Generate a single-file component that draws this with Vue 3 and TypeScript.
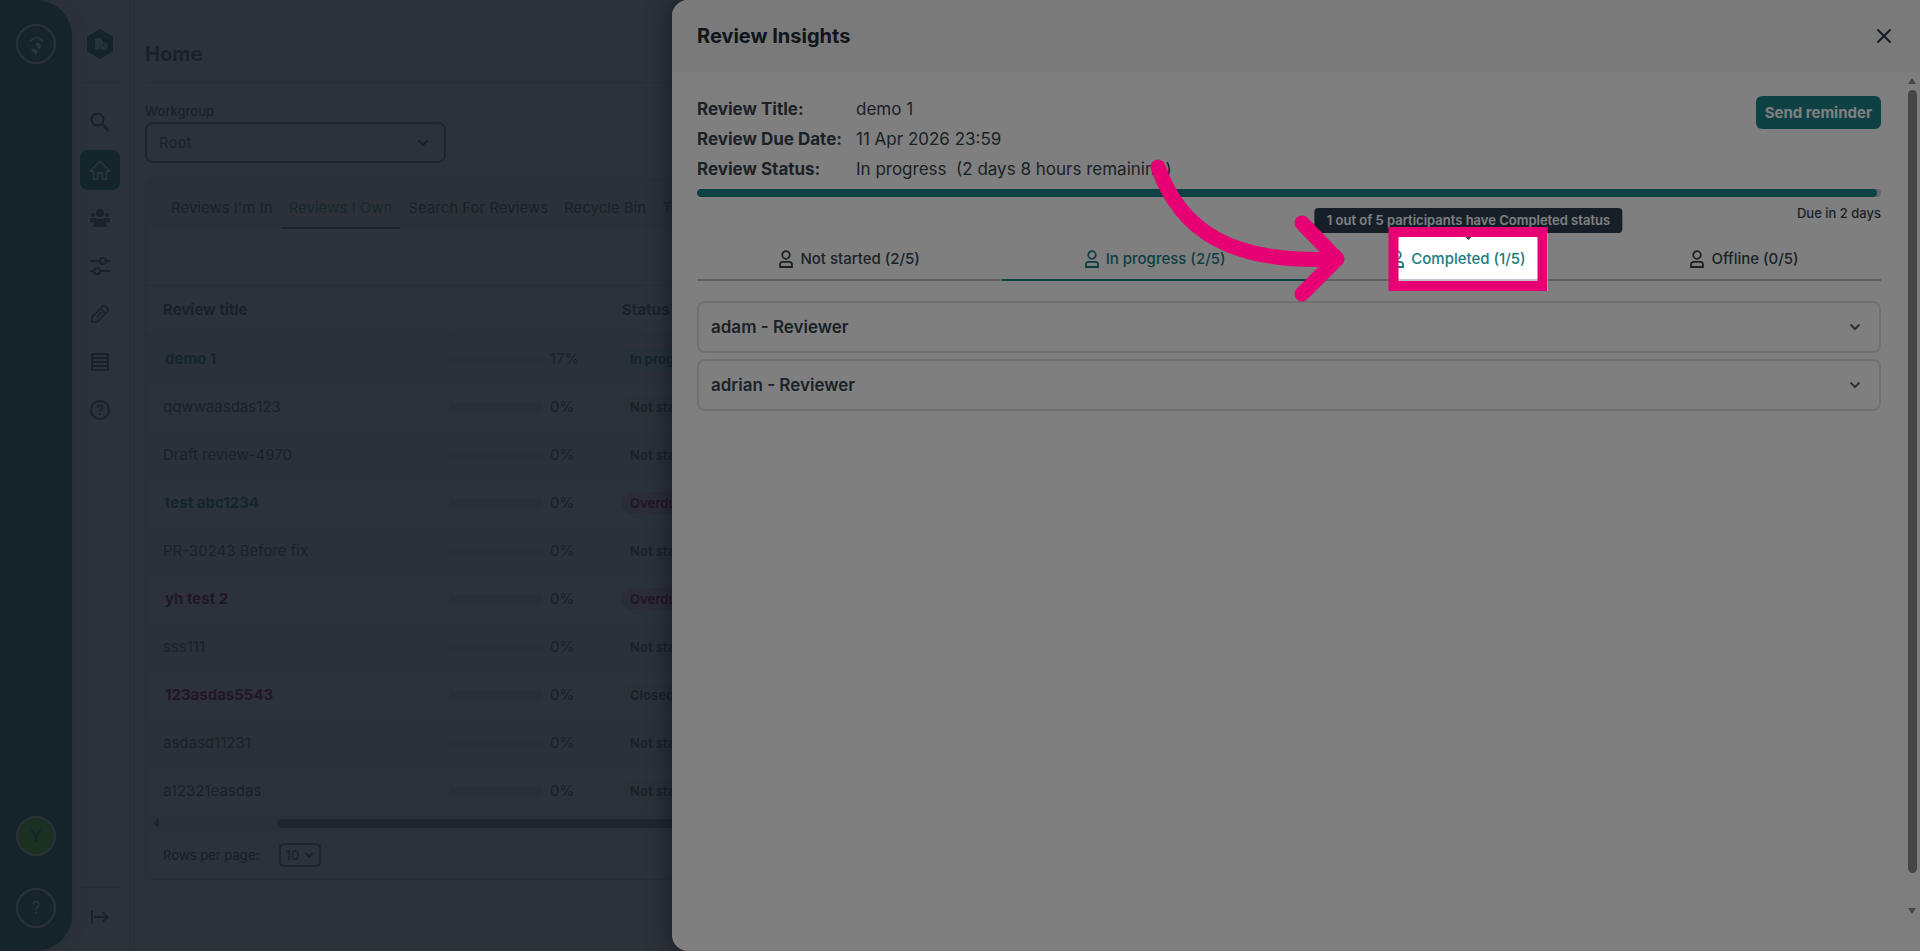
<script setup lang="ts">
import { ref } from 'vue'

interface Review {
  title: string
  percent: number
  status: string
  tone?: 'teal' | 'pink'
  badge?: 'teal' | 'pink' | 'grey'
}

const reviews: Review[] = [
  { title: 'demo 1', percent: 17, status: 'In progress', tone: 'teal', badge: 'teal' },
  { title: 'qqwwaasdas123', percent: 0, status: 'Not started', badge: 'grey' },
  { title: 'Draft review-4970', percent: 0, status: 'Not started' },
  { title: 'test abc1234', percent: 0, status: 'Overdue', tone: 'teal', badge: 'pink' },
  { title: 'PR-30243 Before fix', percent: 0, status: 'Not started' },
  { title: 'yh test 2', percent: 0, status: 'Overdue', tone: 'pink', badge: 'pink' },
  { title: 'sss111', percent: 0, status: 'Not started' },
  { title: '123asdas5543', percent: 0, status: 'Closed', tone: 'pink', badge: 'grey' },
  { title: 'asdasd11231', percent: 0, status: 'Not started' },
  { title: 'a12321easdas', percent: 0, status: 'Not started', badge: 'grey' }
]

const reviewTabs = ["Reviews I'm In", 'Reviews I Own', 'Search For Reviews', 'Recycle Bin', 'Templates']
const activeReviewTab = ref('Reviews I Own')

const statusTabs = [
  { name: 'Not started', count: 2 },
  { name: 'In progress', count: 2 },
  { name: 'Completed', count: 1 },
  { name: 'Offline', count: 0 }
]
const activeStatus = ref('In progress')
const hoveredStatus = ref('Completed')
const total = 5
const people = ['adam - Reviewer', 'adrian - Reviewer']
const elapsed = ref(99.7)
const workgroup = ref('Root')
const pageSize = ref('10')
</script>

<template>
  <div class="page">
    <aside class="rail">
      <a href="#" class="ring" aria-label="Organisation">
        <svg width="36" height="36" viewBox="0 0 36 36">
          <path d="M11.500 15.500 18.500 11l7 4.500" fill="none" stroke="currentColor" stroke-width="1.600" />
          <path d="M17 17.500c2.500-1.500 6-.5 6 2.500 0 2-1.500 3.500-4 3.500l1-3.500c-1-.2-2-1.200-3-2.500zM13 23.500c2-1.500 6.500-.5 6.500 2 0 1.500-.5 2.500-2 4l-1-3c-1.500 0-2.500-1-3.500-3z" fill="currentColor" />
        </svg>
      </a>
      <div class="rail-bottom">
        <button class="ring user" type="button" aria-label="Account">Y</button>
        <button class="ring" type="button" aria-label="Help">?</button>
      </div>
    </aside>

    <nav class="nav" aria-label="Sections">
      <a href="#" class="brand" aria-label="Reviews">
        <svg width="28" height="32" viewBox="0 0 28 32">
          <path d="M14 1 27 8.500v15L14 31 1 23.500v-15z" fill="#2a4856" />
          <path d="M9 10h5l3 3v2.500a5 5 0 0 0-3 6H9z" fill="#506474" />
          <circle cx="18" cy="18.500" r="3" fill="none" stroke="#506474" stroke-width="1.400" />
          <path d="m16.500 18.500 1.200 1.200 2-2.200" fill="none" stroke="#506474" />
        </svg>
      </a>
      <div class="nav-list">
        <a href="#" class="nav-item" aria-label="Search">
          <svg viewBox="0 0 20 20"><circle cx="7.500" cy="7.500" r="6" /><path d="m12 12 6.500 6.500" stroke-width="2.600" /></svg>
        </a>
        <a href="#" class="nav-item active" aria-label="Home">
          <svg viewBox="0 0 20 20"><path d="M1.200 10 10 1.200 18.800 10v1.300h-2.300V19h-4.300v-6H7.800v6H3.500v-7.700H1.200z" stroke-width="1.500" /></svg>
        </a>
        <a href="#" class="nav-item" aria-label="Groups">
          <svg viewBox="0 0 20 20" class="solid"><circle cx="10" cy="5" r="4" /><circle cx="3" cy="7" r="2" /><circle cx="17" cy="7" r="2" /><path d="M0 10h6l1 1h6l1-1h6v4h-3.500v5h-13v-5H0z" /></svg>
        </a>
        <a href="#" class="nav-item" aria-label="Settings">
          <svg viewBox="0 0 20 20"><path d="M0 5h9.500M16.500 5H20M0 15h3.500M10.500 15H20" /><circle cx="13" cy="5" r="3" /><circle cx="7" cy="15" r="3" /></svg>
        </a>
        <a href="#" class="nav-item" aria-label="Edit">
          <svg viewBox="0 0 20 20" stroke-linejoin="round"><path d="M2 18v-5L13 2q1-.8 2 0l3 3q.8 1 0 2L7 18zM10.500 4.500l5 5M6.500 13.500l5-5" stroke-width="1.700" /></svg>
        </a>
        <a href="#" class="nav-item" aria-label="Lists">
          <svg viewBox="0 0 20 20"><path d="M2 2h16v16H2zM2 6h16M2 10h16M2 14h16" /></svg>
        </a>
        <a href="#" class="nav-item" aria-label="Support">
          <svg viewBox="0 0 20 20"><circle cx="10" cy="10" r="9" /><path d="M7.500 8c0-3.500 5-3.300 5-.3 0 1.800-2.500 2-2.500 4M10 13.200v1.800" /></svg>
        </a>
      </div>
      <div class="nav-foot">
        <button type="button" class="nav-item" aria-label="Expand menu">
          <svg viewBox="0 0 20 20"><path d="M2 3.500v13M5 10h12M12.500 5.200l5 4.800-5 4.800" /></svg>
        </button>
      </div>
    </nav>

    <main class="main">
      <h1 class="page-title">Home</h1>
      <label class="field-label" for="workgroup">Workgroup</label>
      <div class="select workgroup">
        <select id="workgroup" v-model="workgroup"><option>Root</option></select>
        <svg width="12" height="12" viewBox="0 0 12 12"><path d="m1.500 3.500 4.500 4.500 4.500-4.500" /></svg>
      </div>

      <section class="card">
        <div class="review-tabs" role="tablist">
          <button
            v-for="tab in reviewTabs" :key="tab" type="button" role="tab" class="review-tab"
            :class="{ active: tab === activeReviewTab }" @click="activeReviewTab = tab"
          >{{ tab }}</button>
        </div>
        <div class="toolbar"></div>
        <table class="reviews">
          <thead>
            <tr><th class="col-title">Review title</th><th class="col-progress"></th><th class="col-status">Status</th></tr>
          </thead>
          <tbody>
            <tr v-for="r in reviews" :key="r.title">
              <td class="col-title"><a href="#" class="review-link" :class="r.tone">{{ r.title }}</a></td>
              <td class="col-progress"><div class="meter"><span class="meter-bar"></span>{{ r.percent }}%</div></td>
              <td class="col-status"><span class="badge" :class="r.badge">{{ r.status }}</span></td>
            </tr>
          </tbody>
        </table>
        <div class="hscroll">
          <svg width="6" height="10" viewBox="0 0 6 10"><path d="M6 0v10L0 5z" /></svg>
          <span class="hthumb"></span>
        </div>
        <div class="pager">
          <label for="page-size">Rows per page:</label>
          <div class="select page-size">
            <select id="page-size" v-model="pageSize"><option>10</option></select>
            <svg width="10" height="10" viewBox="0 0 12 12"><path d="m1.500 3.500 4.500 4.500 4.500-4.500" /></svg>
          </div>
        </div>
      </section>
    </main>

    <section class="drawer" role="dialog" aria-labelledby="drawer-title">
      <header class="drawer-head">
        <h2 id="drawer-title">Review Insights</h2>
        <button type="button" class="close" aria-label="Close">
          <svg width="16" height="16" viewBox="0 0 16 16"><path d="m1.500 1.500 13 13M14.500 1.500l-13 13" /></svg>
        </button>
      </header>
      <div class="drawer-body">
        <div class="content">
          <div class="summary">
            <dl class="facts">
              <dt>Review Title:</dt><dd>demo 1</dd>
              <dt>Review Due Date:</dt><dd>11 Apr 2026 23:59</dd>
              <dt>Review Status:</dt><dd>In progress&nbsp; (2 days 8 hours remaining)</dd>
            </dl>
            <button type="button" class="primary">Send reminder</button>
          </div>
          <div class="timeline"><span class="timeline-fill" :style="{ width: elapsed + '%' }"></span></div>
          <p class="due">Due in 2 days</p>

          <div class="status-tabs" role="tablist">
            <button
              v-for="tab in statusTabs" :key="tab.name" type="button" role="tab" class="status-tab"
              :class="{ active: tab.name === activeStatus, hovered: tab.name === hoveredStatus }"
              @click="activeStatus = tab.name"
            >
              <svg width="14" height="18" viewBox="0 0 14 18"><circle cx="7" cy="5" r="3.800" /><path d="M1 17v-2.500q0-2.700 2.700-2.700h6.600q2.700 0 2.700 2.700V17z" /></svg>
              <span class="status-label">
                {{ tab.name }} ({{ tab.count }}/{{ total }})
                <span v-if="tab.name === hoveredStatus" class="tooltip" role="tooltip">{{ tab.count }} out of {{ total }} participants have {{ tab.name }} status</span>
                <span v-if="tab.name === hoveredStatus" class="spotlight"></span>
                <svg v-if="tab.name === hoveredStatus" class="pointer" width="212" height="160" viewBox="0 0 212 160">
                  <path d="M18 18C40 81 90 115 195 110M162 74l35 36-35 35" />
                </svg>
              </span>
            </button>
          </div>

          <div class="people">
            <button v-for="person in people" :key="person" type="button" class="person" aria-expanded="false">
              {{ person }}
              <svg width="12" height="12" viewBox="0 0 12 12"><path d="m1.500 3.500 4.500 4.500 4.500-4.500" /></svg>
            </button>
          </div>
        </div>
        <div class="vscroll">
          <svg width="8" height="6" viewBox="0 0 8 6"><path d="M4 0l4 6H0z" /></svg>
          <span class="vthumb"></span>
          <svg width="8" height="6" viewBox="0 0 8 6"><path d="M0 0h8L4 6z" /></svg>
        </div>
      </div>
    </section>
  </div>
</template>

<style>
body { background: #586474; overflow: hidden; }
</style>

<style scoped>
.page {
  --bg: #586474;
  --line: #525d6c;
  --ink: #354252;
  --teal: #284a56;
  --text: #37454f;
  --brand: #1c8388;
  position: relative;
  display: flex;
  height: 100vh;
  overflow: hidden;
  background: var(--bg);
  color: var(--ink);
  font: 400 15px/20px Inter, "Open Sans", sans-serif;
}
.page *, .page *::before, .page *::after { box-sizing: border-box; }
button, select { font: inherit; color: inherit; background: none; border: 0; padding: 0; margin: 0; }
a { color: inherit; text-decoration: none; }
svg { display: block; flex: none; fill: none; stroke: currentColor; stroke-width: 2; }

.rail {
  flex: none;
  width: 72px;
  display: flex;
  flex-direction: column;
  align-items: center;
  justify-content: space-between;
  padding: 24px 0 23px;
  border-radius: 0 36px 36px 0;
  background: #2c4a58;
  box-shadow: 0 0 16px rgba(56, 68, 82, 0.2);
}
.rail-bottom { display: flex; flex-direction: column; gap: 32px; }
.ring {
  display: flex;
  align-items: center;
  justify-content: center;
  width: 40px;
  height: 40px;
  border: 2px solid #54626e;
  border-radius: 50%;
  color: #5a6874;
  font-size: 17px;
}
.ring svg { stroke: none; }
.user { background: #346040; color: #284456; font-weight: 500; }

.nav {
  flex: none;
  width: 59px;
  display: flex;
  flex-direction: column;
  padding: 28px 9px 14px 8px;
  border-right: 2px solid #525d6c;
}
.brand { display: flex; justify-content: center; padding-bottom: 22px; border-bottom: 1px solid var(--line); }
.brand svg { stroke: none; }
.nav-list { display: flex; flex-direction: column; align-items: center; gap: 8px; padding-top: 19px; }
.nav-item {
  display: flex;
  align-items: center;
  justify-content: center;
  width: 40px;
  height: 40px;
  border-radius: 8px;
}
.nav-item svg { width: 20px; height: 20px; }
.nav-item .solid { fill: currentColor; stroke: none; }
.nav-item.active { background: #284a56; color: #5c6c7a; }
.nav-foot { margin-top: auto; padding-top: 9px; border-top: 1px solid var(--line); }

.main { flex: 1; min-width: 0; padding: 40px 24px 0 14px; }
.page-title {
  margin: 0;
  height: 43px;
  font-size: 20px;
  line-height: 28px;
  font-weight: 700;
  border-bottom: 1px solid var(--line);
}
.field-label { display: block; margin-top: 18px; font-size: 13px; font-weight: 500; }
.select { position: relative; display: flex; align-items: center; border: 2px solid #3f4b5a; }
.select select { appearance: none; width: 100%; height: 100%; outline: 0; }
.select svg { position: absolute; right: 15px; pointer-events: none; }
.workgroup { width: 301px; height: 41px; border-radius: 8px; margin-top: 1px; }
.workgroup select { padding-left: 12px; font-size: 15px; }

.card {
  margin-top: 16px;
  border: 1px solid var(--line);
  border-radius: 10px;
  overflow: hidden;
}
.review-tabs { display: flex; height: 49px; padding-left: 17px; background: #56626f; }
.review-tab { flex: none; padding: 6px 8px 0; border-bottom: 2px solid transparent; border-top: 2px solid transparent; }
.review-tab.active { color: #2e5260; border-bottom-color: #2c4e5c; }
.toolbar { height: 57px; border-bottom: 1px solid var(--line); }

.reviews { width: 100%; border-collapse: separate; border-spacing: 0; table-layout: fixed; }
.reviews th { height: 49px; padding: 0; text-align: left; font-weight: 700; border-bottom: 1px solid var(--line); }
.reviews td { height: 48px; padding: 0; }
.reviews tbody tr:nth-child(odd) { background: #566270; }
.reviews .col-title { width: 304px; padding-left: 17px; border-right: 1px solid #54606e; }
.reviews .col-progress { width: 167px; }
.reviews th.col-status { padding-left: 5px; }
.review-link.teal, .review-link.pink { margin-left: 2px; font-weight: 700; }
.review-link.teal { color: var(--teal); }
.review-link.pink { color: #442e4a; }
.meter { display: flex; align-items: center; gap: 7px; }
.meter-bar { width: 93px; height: 9px; border-radius: 0 5px 5px 0; background: #525e6b; }
.badge { display: inline-block; margin-left: 5px; padding: 1px 8px; border-radius: 10px; font-size: 13px; font-weight: 700; }
.badge.teal { background: #4e6270; color: var(--teal); }
.badge.pink { background: #555b6b; color: #482e48; }
.badge.grey { background: #56626f; }

.hscroll { display: flex; align-items: center; gap: 118px; height: 16px; padding-left: 7px; background: #55616e; }
.hscroll svg { fill: #3c4856; stroke: none; }
.hthumb { flex: 1; height: 9px; border-radius: 5px; background: #404b59; }
.pager { display: flex; align-items: center; gap: 20px; height: 48px; padding-left: 17px; font-size: 13px; font-weight: 500; }
.page-size { width: 42px; height: 24px; border-radius: 4px; }
.page-size select { padding-left: 4px; }
.page-size svg { right: 5px; }

.drawer {
  position: absolute;
  inset: 0 0 0 auto;
  width: 65%;
  display: flex;
  flex-direction: column;
  border-radius: 16px 0 0 16px;
  background: #fff;
  color: var(--text);
  box-shadow: 0 0 24px rgba(20, 24, 40, 0.7);
}
.drawer-head {
  display: flex;
  align-items: center;
  justify-content: space-between;
  flex: none;
  height: 72px;
  padding: 0 28px 0 25px;
  border-radius: 16px 0 0 0;
  background: #f4f4f4;
}
.drawer-head h2 { margin: 0; font-size: 20px; line-height: 28px; font-weight: 700; color: #202c38; }
.close svg { color: #283644; }
.drawer-body { flex: 1; display: flex; min-height: 0; }
.content { flex: 1; min-width: 0; padding: 22px 23px 0 25px; }
.summary { display: flex; justify-content: space-between; align-items: flex-start; }
.facts { display: grid; grid-template-columns: auto auto; column-gap: 14px; margin: 0; line-height: 30px; font-size: 17px; }
.facts dt { font-weight: 700; }
.facts dd { margin: 0; }
.primary {
  height: 33px;
  margin-top: 2px;
  padding: 0 9px;
  border-radius: 6px;
  background: var(--brand);
  color: #fff;
  font-weight: 700;
}
.timeline { height: 8px; margin-top: 5px; border-radius: 4px; background: #ccccd2; overflow: hidden; }
.timeline-fill { display: block; height: 100%; border-radius: 4px; background: var(--brand); }
.due { margin: 6px 0 0; text-align: right; font-size: 13px; font-weight: 500; }

.status-tabs { display: flex; margin-top: 13px; }
.status-tab {
  flex: 1 1 auto;
  display: flex;
  align-items: center;
  justify-content: center;
  gap: 7px;
  height: 45px;
  padding-top: 2px;
  border-bottom: 2px solid #c4c4cc;
  font-weight: 500;
}
.status-tab svg { stroke-width: 1.800; }
.status-tab.active, .status-tab.hovered { color: #1a7c82; }
.status-tab.active { border-bottom-color: var(--brand); }
.status-tab.hovered .status-label { position: relative; z-index: 1; }
.tooltip {
  position: absolute;
  left: 50%;
  bottom: 36px;
  transform: translateX(-50%);
  padding: 3px 12px;
  border-radius: 4px;
  background: #2c3e50;
  color: #fff;
  font-size: 13px;
  line-height: 19px;
  font-weight: 600;
  white-space: nowrap;
}
.tooltip::after {
  content: "";
  position: absolute;
  top: 100%;
  left: 50%;
  margin-left: -7px;
  border: 7px solid transparent;
  border-top-color: #2c3e50;
}
/* Frames the highlighted tab and dims everything outside the frame. */
.spotlight {
  position: absolute;
  left: 50%;
  bottom: -22px;
  width: 159px;
  height: 64px;
  transform: translateX(-50%);
  border: 10px solid #e60073;
  box-shadow: 0 0 0 200vw rgba(0, 0, 0, 0.5);
  pointer-events: none;
}
.status-tab .pointer {
  position: absolute;
  right: calc(50% + 116px);
  top: -100px;
  stroke: #e60073;
  stroke-width: 15;
  stroke-linecap: round;
  stroke-linejoin: round;
  pointer-events: none;
}

.people { display: flex; flex-direction: column; gap: 6px; margin-top: 20px; }
.person {
  display: flex;
  align-items: center;
  justify-content: space-between;
  height: 52px;
  padding: 0 18px 0 12px;
  border: 2px solid #e0e3e3;
  border-radius: 8px;
  font-size: 17px;
  font-weight: 600;
}
.person svg { color: #5a6474; }
.vscroll {
  flex: none;
  width: 16px;
  display: flex;
  flex-direction: column;
  align-items: center;
  margin-bottom: 32px;
  padding: 6px 0 5px;
  background: #fcfcfc;
}
.vscroll svg { fill: #8c8c8c; stroke: none; }
.vthumb { flex: 1; width: 9px; margin: 6px 0 35px; border-radius: 5px; background: #8c8c8c; }
</style>
